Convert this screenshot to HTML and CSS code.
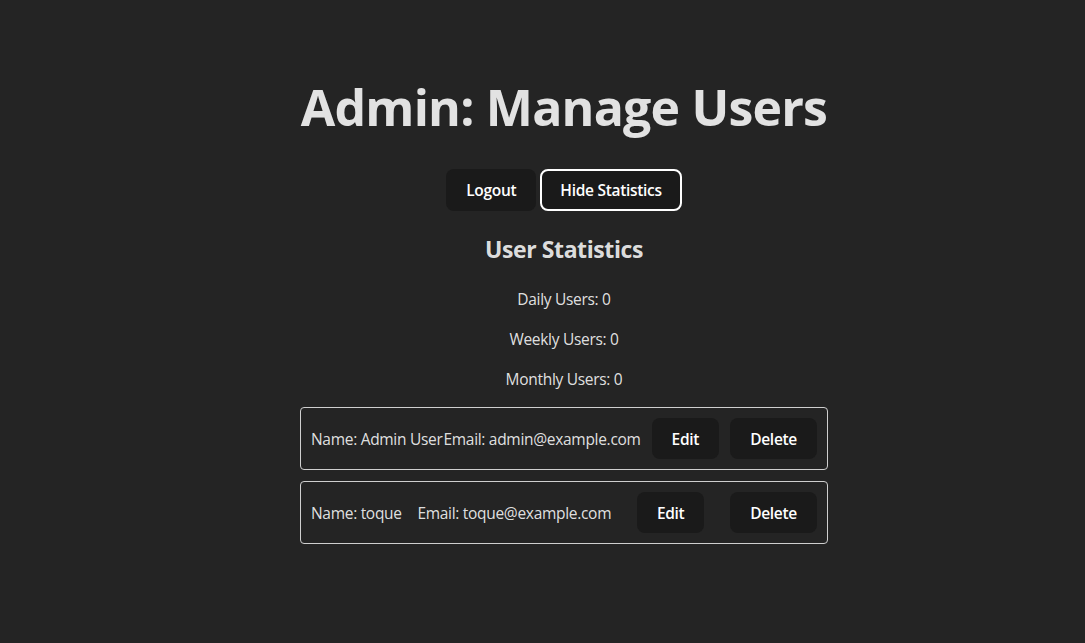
FILE: index.html
```html
<!DOCTYPE html>
<html lang="en">
<head>
<meta charset="utf-8">
<title>Admin: Manage Users</title>
<link rel="stylesheet" href="styles.css">
</head>
<body>
<div class="app">
  <main class="panel">
    <h1 class="title">Admin: Manage Users</h1>
    <div class="actions">
      <button class="btn">Logout</button>
      <button class="btn btn-active">Hide Statistics</button>
    </div>
    <section class="stats">
      <h2 class="stats-title">User Statistics</h2>
      <p class="stat">Daily Users: 0</p>
      <p class="stat">Weekly Users: 0</p>
      <p class="stat">Monthly Users: 0</p>
    </section>
    <div class="user-list">
      <div class="user-card">
        <span class="user-field">Name: Admin User</span>
        <span class="user-field">Email: admin@example.com</span>
        <button class="btn btn-row">Edit</button>
        <button class="btn btn-row">Delete</button>
      </div>
      <div class="user-card">
        <span class="user-field">Name: toque</span>
        <span class="user-field">Email: toque@example.com</span>
        <button class="btn btn-row">Edit</button>
        <button class="btn btn-row">Delete</button>
      </div>
    </div>
  </main>
</div>
</body>
</html>
```
FILE: styles.css
```css
html, body {
  margin: 0;
  background: #242424;
}

body {
  font-family: "Open Sans", "Noto Sans", sans-serif;
  color: rgba(255, 255, 255, 0.87);
  font-size: 15.5px;
  letter-spacing: -0.3px;
}

.app {
  display: flex;
  flex-direction: column;
  align-items: center;
  padding: 79px 0 0 43px;
  min-height: 100vh;
  box-sizing: border-box;
}

.panel {
  width: 528px;
  text-align: center;
}

.title {
  margin: 0 0 34px;
  font-size: 50px;
  line-height: 56px;
  font-weight: 700;
  letter-spacing: -0.8px;
  white-space: nowrap;
}

.actions {
  display: flex;
  justify-content: center;
  gap: 4px;
  height: 42px;
}

.btn {
  font-family: inherit;
  font-size: 15.5px;
  letter-spacing: -0.3px;
  font-weight: 600;
  color: #fff;
  background: #1a1a1a;
  border: 1px solid transparent;
  border-radius: 8px;
  height: 42px;
  padding: 0 19px;
  cursor: pointer;
  white-space: nowrap;
}

.btn-active {
  border: 2px solid #fff;
  padding: 0 18px;
}

.stats {
  padding-top: 20px;
}

.stats-title {
  margin: 0 0 20px;
  font-size: 23px;
  line-height: 36px;
  font-weight: 700;
  letter-spacing: -0.4px;
}

.stat {
  margin: 0 0 16px;
  line-height: 24px;
}

.user-list {
  display: flex;
  flex-direction: column;
  gap: 11px;
}

.user-card {
  display: flex;
  align-items: center;
  justify-content: space-between;
  padding: 10px;
  border: 1px solid #cfcfcf;
  border-radius: 4px;
}

.user-field {
  white-space: nowrap;
  line-height: 24px;
}

.btn-row {
  height: 41px;
  margin-left: 10px;
}
```
